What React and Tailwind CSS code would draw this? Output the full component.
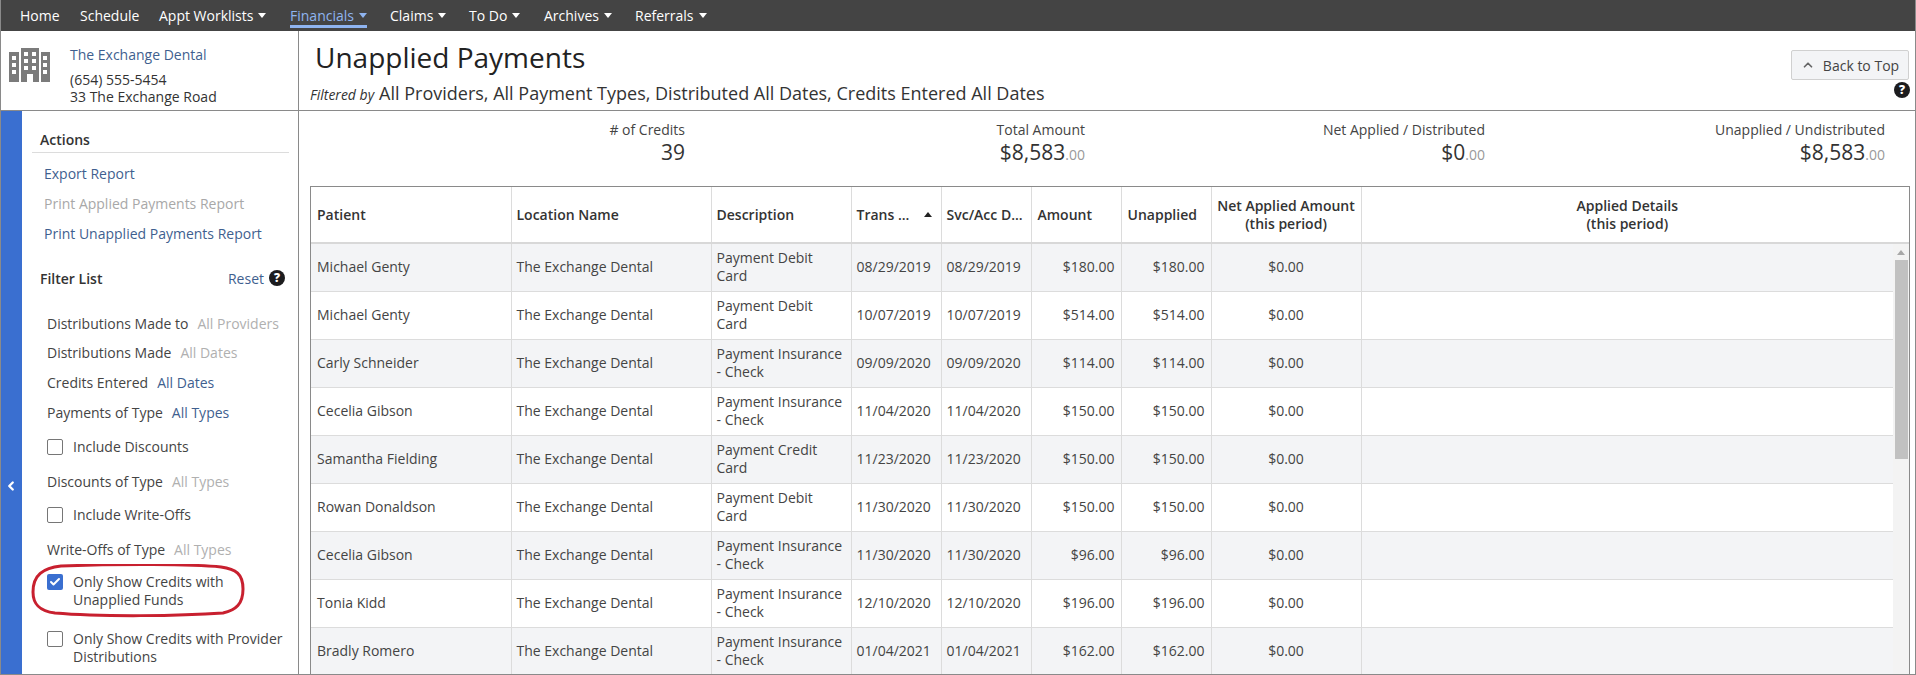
import { ChevronLeft, ChevronUp, Check } from 'lucide-react'

const navItems = [
  { label: 'Home', w: 'w-[60px]' },
  { label: 'Schedule', w: 'w-[79px]' },
  { label: 'Appt Worklists', caret: true, w: 'w-[131px]' },
  { label: 'Financials', caret: true, active: true, w: 'w-[100px]' },
  { label: 'Claims', caret: true, w: 'w-[79px]' },
  { label: 'To Do', caret: true, w: 'w-[75px]' },
  { label: 'Archives', caret: true, w: 'w-[91px]' },
  { label: 'Referrals', caret: true, w: 'w-[90px]' },
]

const rows = [
  ['Michael Genty', 'Payment Debit Card', '08/29/2019', '$180.00'],
  ['Michael Genty', 'Payment Debit Card', '10/07/2019', '$514.00'],
  ['Carly Schneider', 'Payment Insurance - Check', '09/09/2020', '$114.00'],
  ['Cecelia Gibson', 'Payment Insurance - Check', '11/04/2020', '$150.00'],
  ['Samantha Fielding', 'Payment Credit Card', '11/23/2020', '$150.00'],
  ['Rowan Donaldson', 'Payment Debit Card', '11/30/2020', '$150.00'],
  ['Cecelia Gibson', 'Payment Insurance - Check', '11/30/2020', '$96.00'],
  ['Tonia Kidd', 'Payment Insurance - Check', '12/10/2020', '$196.00'],
  ['Bradly Romero', 'Payment Insurance - Check', '01/04/2021', '$162.00'],
]

const stats = [
  { label: '# of Credits', value: '39', w: 'w-[386px]' },
  { label: 'Total Amount', value: '$8,583', cents: '.00', w: 'w-[400px]' },
  { label: 'Net Applied / Distributed', value: '$0', cents: '.00', w: 'w-[400px]' },
  { label: 'Unapplied / Undistributed', value: '$8,583', cents: '.00', w: 'w-[400px]' },
]

const filters = [
  { type: 'filter', label: 'Distributions Made to', value: 'All Providers', off: true, h: 'h-[29px]' },
  { type: 'filter', label: 'Distributions Made', value: 'All Dates', off: true, h: 'h-[30px]' },
  { type: 'filter', label: 'Credits Entered', value: 'All Dates', h: 'h-[30px]' },
  { type: 'filter', label: 'Payments of Type', value: 'All Types', h: 'h-[36px]' },
  { type: 'check', label: 'Include Discounts', h: 'h-[33px]' },
  { type: 'filter', label: 'Discounts of Type', value: 'All Types', off: true, h: 'h-[35px]' },
  { type: 'check', label: 'Include Write-Offs', h: 'h-[33px]' },
  { type: 'filter', label: 'Write-Offs of Type', value: 'All Types', off: true, h: 'h-[35px]' },
]

function HelpIcon() {
  return (
    <span className="flex items-center justify-center w-4 h-4 rounded-full bg-[#1c1c1e] text-white text-[12px] font-extrabold leading-none shrink-0">?</span>
  )
}

function Checkbox({ checked }) {
  if (checked) {
    return (
      <span className="flex items-center justify-center w-4 h-4 rounded-[2px] bg-[#3a6fd0] shrink-0">
        <Check size={12} strokeWidth={4} className="text-white" />
      </span>
    )
  }
  return <span className="w-4 h-4 rounded-[2px] border border-[#767676] bg-white shrink-0" />
}

function BuildingIcon() {
  return (
    <svg width="41" height="34" viewBox="0 0 41 34" className="shrink-0">
      <path fillRule="evenodd" fill="#7b7b7b" d="M0 4h10v30H0z M3 8v4h4V8z M3 15v4h4v-4z M3 22v4h4v-4z" />
      <path fillRule="evenodd" fill="#7b7b7b" d="M12 0h18v34h-6v-8h-6v8h-6z M15 4v4h4V4z M23 4v4h4V4z M15 11v4h4v-4z M23 11v4h4v-4z M15 18v4h4v-4z M23 18v4h4v-4z" />
      <path fillRule="evenodd" fill="#7b7b7b" d="M32 4h9v30h-9z M34 8v4h4V8z M34 15v4h4v-4z M34 22v4h4v-4z" />
    </svg>
  )
}

export default function App() {
  return (
    <div className="h-[675px] overflow-hidden bg-white flex flex-col border-l border-r border-b border-[#8a8a8a] text-[14px] text-[#444]" style={{ fontFamily: '"Open Sans", sans-serif' }}>
      {/* Top nav */}
      <nav className="h-[31px] bg-[#444444] flex items-stretch pl-[19px] shrink-0 text-white text-[14px]">
        {navItems.map((item) => (
          <div key={item.label} className={`${item.w} shrink-0 flex`}>
            <span className={`flex items-center h-[28px] pt-[6px] border-b-[3px] ${item.active ? 'text-[#8fb4f0] border-[#8fb4f0]' : 'border-transparent'}`}>
              {item.label}
              {item.caret && <span className="ml-[5px] w-0 h-0 border-l-[4px] border-r-[4px] border-t-[5px] border-l-transparent border-r-transparent border-t-current" />}
            </span>
          </div>
        ))}
      </nav>

      {/* Practice + page title */}
      <header className="h-[80px] flex shrink-0 border-b border-[#8a8a8a]">
        <div className="w-[298px] shrink-0 border-r border-[#8a8a8a] flex pl-[8px] pt-[17px] gap-[20px]">
          <BuildingIcon />
          <div className="-mt-[2px] text-[14px] leading-[18px]">
            <div className="text-[#3f5f8f] mb-[7px]">The Exchange Dental</div>
            <div className="text-[#333] h-[17px]">(654) 555-5454</div>
            <div className="text-[#333]">33 The Exchange Road</div>
          </div>
        </div>
        <div className="flex-1 flex justify-between pl-[11px] pr-[6px]">
          <div>
            <h1 className="text-[28px] leading-[38px] text-[#222] pl-[5px] mt-[7px]">Unapplied Payments</h1>
            <p className="text-[18px] leading-[24px] text-[#333] mt-[5px]">
              <em className="text-[14px] mr-[5px]">Filtered by</em>All Providers, All Payment Types, Distributed All Dates, Credits Entered All Dates
            </p>
          </div>
          <div className="flex flex-col items-end pt-[19px]">
            <button className="w-[118px] h-[30px] flex items-center justify-center gap-[8px] bg-[#f3f4f6] border border-[#d0d0d0] rounded-[2px] text-[14px] text-[#444]">
              <ChevronUp size={14} strokeWidth={3} className="text-[#666]" />
              Back to Top
            </button>
            <div className="mt-[2px] mr-[-1px]"><HelpIcon /></div>
          </div>
        </div>
      </header>

      <div className="flex-1 flex min-h-0">
        {/* Collapse handle */}
        <div className="w-[21px] shrink-0 bg-[#3a6fd0] flex items-start justify-center pt-[368px] pr-[1px]">
          <ChevronLeft size={14} strokeWidth={4} className="text-white" />
        </div>

        {/* Sidebar */}
        <aside className="w-[277px] shrink-0 border-r border-[#8a8a8a] pl-[10px] pr-[9px] pt-[19px]">
          <h3 className="font-semibold text-[#333] leading-[19px] pl-[8px] pb-[4px] border-b border-[#dcdcdc] h-[23px]">Actions</h3>
          <div className="pl-[12px] mt-[11px] text-[#3f5f8f] leading-[19px]">
            <div className="h-[30px]">Export Report</div>
            <div className="h-[30px] text-[#a8a8a8]">Print Applied Payments Report</div>
            <div className="h-[30px]">Print Unapplied Payments Report</div>
          </div>
          <div className="flex items-center justify-between h-[20px] mt-[14px] pl-[8px] pr-[4px]">
            <span className="font-semibold text-[#333]">Filter List</span>
            <span className="flex items-center gap-[5px] text-[#3f5f8f]">Reset <HelpIcon /></span>
          </div>
          <div className="pl-[15px] mt-[26px]">
            {filters.map((f) =>
              f.type === 'filter' ? (
                <div key={f.label} className={`${f.h} leading-[19px] text-[#444] whitespace-nowrap`}>
                  {f.label}
                  <span className={`ml-[9px] ${f.off ? 'text-[#b0b0b0]' : 'text-[#3f5f8f]'}`}>{f.value}</span>
                </div>
              ) : (
                <div key={f.label} className={`${f.h} flex gap-[10px] items-start`}>
                  <Checkbox />
                  <span className="leading-[16px]">{f.label}</span>
                </div>
              )
            )}
            {/* highlighted option, ring is hand-drawn in the picture */}
            <div className="relative flex gap-[10px] h-[57px] mt-[-1px]">
              <Checkbox checked />
              <span className="leading-[18px] -mt-px">Only Show Credits with<br />Unapplied Funds</span>
              <svg width="214" height="54" viewBox="0 0 214 54" className="absolute -left-[16px] -top-[10px]" fill="none">
                <path d="M30 2 C90 0 160 0 190 3 C205 5 212 10 212 25 C212 40 205 46 192 49 C150 52 70 53 24 49 C8 47 2 40 2 28 C2 11 12 4 30 2 Z" stroke="#c8202f" strokeWidth="3" />
              </svg>
            </div>
            <div className="flex gap-[10px]">
              <Checkbox />
              <span className="leading-[18px] -mt-px whitespace-nowrap">Only Show Credits with Provider<br />Distributions</span>
            </div>
          </div>
        </aside>

        {/* Main */}
        <main className="flex-1 min-w-0 pl-[11px] pr-[5px]">
          <div className="flex justify-end pr-[25px] h-[75px] pt-[9px]">
            {stats.map((s) => (
              <div key={s.label} className={`${s.w} text-right shrink-0`}>
                <div className="text-[14px] leading-[19px]">{s.label}</div>
                <div className="text-[21px] leading-[24px] text-[#333] mt-[1px]">
                  {s.value}
                  {s.cents && <span className="text-[14px] text-[#999]">{s.cents}</span>}
                </div>
              </div>
            ))}
          </div>

          <div className="border-t border-l border-r border-[#8a8a8a] h-[500px] overflow-hidden">
            <table className="table-fixed w-full border-collapse">
              <colgroup>
                <col className="w-[200px]" />
                <col className="w-[200px]" />
                <col className="w-[140px]" />
                <col className="w-[90px]" />
                <col className="w-[90px]" />
                <col className="w-[90px]" />
                <col className="w-[90px]" />
                <col className="w-[150px]" />
                <col className="w-[532px]" />
                <col className="w-[16px]" />
              </colgroup>
              <thead>
                <tr className="h-[56px] border-b-2 border-[#d8d8d8] text-[14px] text-[#333] font-semibold leading-[18px]">
                  <th className="font-semibold text-left pl-[6px] pr-[5px] border-r border-[#dcdcdc]">Patient</th>
                  <th className="font-semibold text-left px-[5px] border-r border-[#dcdcdc]">Location Name</th>
                  <th className="font-semibold text-left px-[5px] border-r border-[#dcdcdc]">Description</th>
                  <th className="font-semibold text-left px-[5px] border-r border-[#dcdcdc] whitespace-nowrap">
                    <span className="flex items-center justify-between pr-[4px]">
                      Trans ...
                      <span className="w-0 h-0 border-l-[4px] border-r-[4px] border-b-[5px] border-l-transparent border-r-transparent border-b-[#222]" />
                    </span>
                  </th>
                  <th className="font-semibold text-left px-[5px] border-r border-[#dcdcdc] whitespace-nowrap">Svc/Acc D...</th>
                  <th className="font-semibold text-left pl-[6px] pr-[4px] border-r border-[#dcdcdc]">Amount</th>
                  <th className="font-semibold text-left pl-[6px] pr-[4px] border-r border-[#dcdcdc]">Unapplied</th>
                  <th className="font-semibold text-center px-[5px] border-r border-[#dcdcdc] whitespace-nowrap">Net Applied Amount<br />(this period)</th>
                  <th className="font-semibold text-center px-[5px]">Applied Details<br />(this period)</th>
                  <th className="p-0" />
                </tr>
              </thead>
              <tbody className="leading-[18px]">
                {rows.map((r, i) => (
                  <tr key={i} className={`h-[48px] ${i % 2 === 0 ? 'bg-[#f3f4f6]' : 'bg-white'}`}>
                    <td className="pl-[6px] pr-[5px] border-r border-b border-[#dcdcdc]">{r[0]}</td>
                    <td className="px-[5px] border-r border-b border-[#dcdcdc]">The Exchange Dental</td>
                    <td className="px-[5px] border-r border-b border-[#dcdcdc]">{r[1]}</td>
                    <td className="pl-[5px] border-r border-b border-[#dcdcdc]">{r[2]}</td>
                    <td className="pl-[5px] border-r border-b border-[#dcdcdc]">{r[2]}</td>
                    <td className="px-[6px] text-right border-r border-b border-[#dcdcdc]">{r[3]}</td>
                    <td className="px-[6px] text-right border-r border-b border-[#dcdcdc]">{r[3]}</td>
                    <td className="px-[5px] text-center border-r border-b border-[#dcdcdc]">$0.00</td>
                    <td className="border-b border-[#dcdcdc]" />
                    {i === 0 && (
                      <td rowSpan={rows.length} className="p-0 bg-[#f3f3f3] align-top">
                        <div className="flex flex-col items-center h-full">
                          <span className="mt-[6px] w-0 h-0 border-l-[4px] border-r-[4px] border-b-[5px] border-l-transparent border-r-transparent border-b-[#a8a8a8]" />
                          <div className="w-[13px] h-[199px] bg-[#c1c1c1] mt-[5px]" />
                        </div>
                      </td>
                    )}
                  </tr>
                ))}
              </tbody>
            </table>
          </div>
        </main>
      </div>
    </div>
  )
}
